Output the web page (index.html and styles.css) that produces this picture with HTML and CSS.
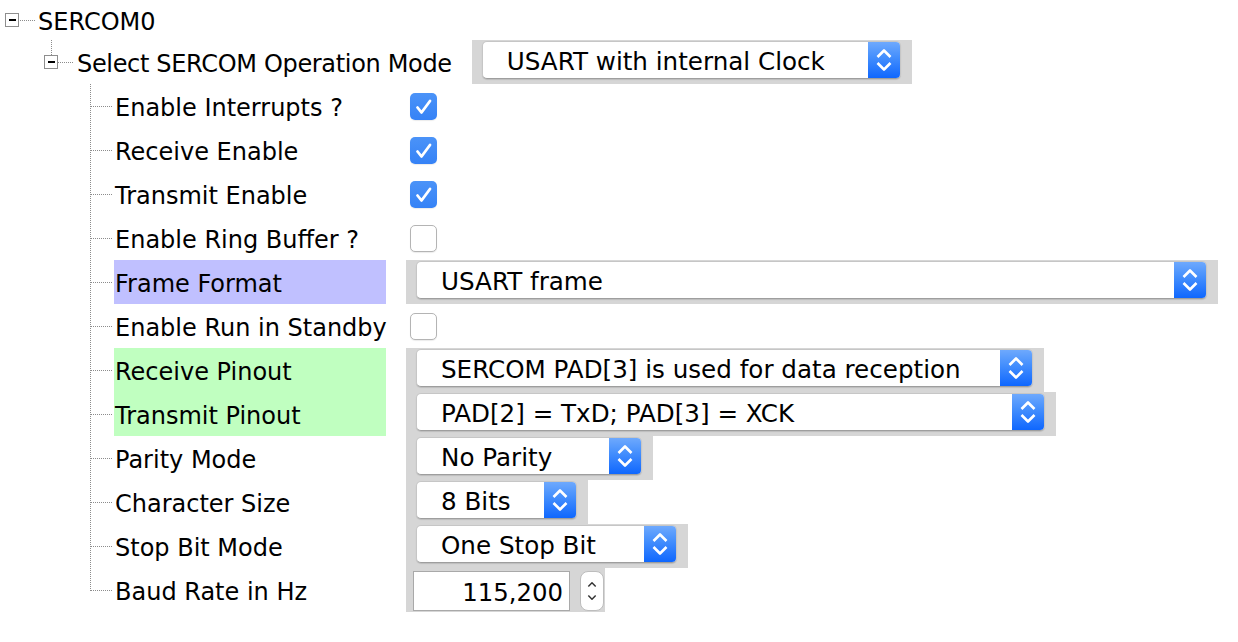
FILE: index.html
```html
<!DOCTYPE html>
<html>
<head>
<meta charset="utf-8">
<title>SERCOM0</title>
<link rel="stylesheet" href="styles.css">
</head>
<body>
<div class="tree">
  <div class="row row-root">
    <span class="handle"></span>
    <span class="hdash hdash-root"></span>
    <span class="label">SERCOM0</span>
  </div>
  <div class="row row-mode">
    <div class="handle-col"><span class="vstub"></span><span class="handle"></span></div>
    <span class="hdash hdash-mode"></span>
    <span class="label label-mode">Select SERCOM Operation Mode</span>
    <div class="panel panel-mode">
      <div class="combo w-mode"><span class="combo-text">USART with internal Clock</span><span class="stepper"><svg width="32" height="36" viewBox="0 0 32 36"><polyline points="9.5,15 16,8.5 22.5,15" fill="none" stroke="#fff" stroke-width="2.6" stroke-linejoin="round"/><polyline points="9.5,21 16,27.5 22.5,21" fill="none" stroke="#fff" stroke-width="2.6" stroke-linejoin="round"/></svg></span></div>
    </div>
  </div>
  <div class="children">
    <div class="item">
      <span class="conn"></span>
      <span class="name">Enable Interrupts ?</span>
      <div class="value value-check"><span class="check on"><svg width="27" height="27" viewBox="0 0 27 27"><polyline points="7.5,14.5 11.5,19.5 20,8" fill="none" stroke="#fff" stroke-width="2.8" stroke-linecap="round" stroke-linejoin="round"/></svg></span></div>
    </div>
    <div class="item">
      <span class="conn"></span>
      <span class="name">Receive Enable</span>
      <div class="value value-check"><span class="check on"><svg width="27" height="27" viewBox="0 0 27 27"><polyline points="7.5,14.5 11.5,19.5 20,8" fill="none" stroke="#fff" stroke-width="2.8" stroke-linecap="round" stroke-linejoin="round"/></svg></span></div>
    </div>
    <div class="item">
      <span class="conn"></span>
      <span class="name">Transmit Enable</span>
      <div class="value value-check"><span class="check on"><svg width="27" height="27" viewBox="0 0 27 27"><polyline points="7.5,14.5 11.5,19.5 20,8" fill="none" stroke="#fff" stroke-width="2.8" stroke-linecap="round" stroke-linejoin="round"/></svg></span></div>
    </div>
    <div class="item">
      <span class="conn"></span>
      <span class="name">Enable Ring Buffer ?</span>
      <div class="value value-check"><span class="check"></span></div>
    </div>
    <div class="item">
      <span class="conn"></span>
      <span class="name hl-blue">Frame Format</span>
      <div class="value"><div class="panel"><div class="combo w-frame"><span class="combo-text">USART frame</span><span class="stepper"><svg width="32" height="36" viewBox="0 0 32 36"><polyline points="9.5,15 16,8.5 22.5,15" fill="none" stroke="#fff" stroke-width="2.6" stroke-linejoin="round"/><polyline points="9.5,21 16,27.5 22.5,21" fill="none" stroke="#fff" stroke-width="2.6" stroke-linejoin="round"/></svg></span></div></div></div>
    </div>
    <div class="item">
      <span class="conn"></span>
      <span class="name">Enable Run in Standby</span>
      <div class="value value-check"><span class="check"></span></div>
    </div>
    <div class="item">
      <span class="conn"></span>
      <span class="name hl-green">Receive Pinout</span>
      <div class="value"><div class="panel"><div class="combo w-rx"><span class="combo-text">SERCOM PAD[3] is used for data reception</span><span class="stepper"><svg width="32" height="36" viewBox="0 0 32 36"><polyline points="9.5,15 16,8.5 22.5,15" fill="none" stroke="#fff" stroke-width="2.6" stroke-linejoin="round"/><polyline points="9.5,21 16,27.5 22.5,21" fill="none" stroke="#fff" stroke-width="2.6" stroke-linejoin="round"/></svg></span></div></div></div>
    </div>
    <div class="item">
      <span class="conn"></span>
      <span class="name hl-green">Transmit Pinout</span>
      <div class="value"><div class="panel"><div class="combo w-tx"><span class="combo-text">PAD[2] = TxD; PAD[3] = XCK</span><span class="stepper"><svg width="32" height="36" viewBox="0 0 32 36"><polyline points="9.5,15 16,8.5 22.5,15" fill="none" stroke="#fff" stroke-width="2.6" stroke-linejoin="round"/><polyline points="9.5,21 16,27.5 22.5,21" fill="none" stroke="#fff" stroke-width="2.6" stroke-linejoin="round"/></svg></span></div></div></div>
    </div>
    <div class="item">
      <span class="conn"></span>
      <span class="name">Parity Mode</span>
      <div class="value"><div class="panel"><div class="combo w-parity"><span class="combo-text">No Parity</span><span class="stepper"><svg width="32" height="36" viewBox="0 0 32 36"><polyline points="9.5,15 16,8.5 22.5,15" fill="none" stroke="#fff" stroke-width="2.6" stroke-linejoin="round"/><polyline points="9.5,21 16,27.5 22.5,21" fill="none" stroke="#fff" stroke-width="2.6" stroke-linejoin="round"/></svg></span></div></div></div>
    </div>
    <div class="item">
      <span class="conn"></span>
      <span class="name">Character Size</span>
      <div class="value"><div class="panel"><div class="combo w-bits"><span class="combo-text">8 Bits</span><span class="stepper"><svg width="32" height="36" viewBox="0 0 32 36"><polyline points="9.5,15 16,8.5 22.5,15" fill="none" stroke="#fff" stroke-width="2.6" stroke-linejoin="round"/><polyline points="9.5,21 16,27.5 22.5,21" fill="none" stroke="#fff" stroke-width="2.6" stroke-linejoin="round"/></svg></span></div></div></div>
    </div>
    <div class="item">
      <span class="conn"></span>
      <span class="name">Stop Bit Mode</span>
      <div class="value"><div class="panel"><div class="combo w-stop"><span class="combo-text">One Stop Bit</span><span class="stepper"><svg width="32" height="36" viewBox="0 0 32 36"><polyline points="9.5,15 16,8.5 22.5,15" fill="none" stroke="#fff" stroke-width="2.6" stroke-linejoin="round"/><polyline points="9.5,21 16,27.5 22.5,21" fill="none" stroke="#fff" stroke-width="2.6" stroke-linejoin="round"/></svg></span></div></div></div>
    </div>
    <div class="item">
      <span class="conn conn-last"></span>
      <span class="name">Baud Rate in Hz</span>
      <div class="value"><div class="panel panel-spin"><span class="field">115,200</span><span class="spin"><svg width="24" height="40" viewBox="0 0 24 40"><polyline points="8,15 12,11 16,15" fill="none" stroke="#333" stroke-width="1.6" stroke-linejoin="round"/><polyline points="8,25 12,29 16,25" fill="none" stroke="#333" stroke-width="1.6" stroke-linejoin="round"/></svg></span></div></div>
    </div>
  </div>
</div>
</body>
</html>
```

FILE: styles.css
```css
* { box-sizing: border-box; }
html, body { margin: 0; padding: 0; background: #fff; }
body {
  font-family: "DejaVu Sans", Verdana, sans-serif;
  font-size: 24px;
  color: #000;
}
.tree { display: flex; flex-direction: column; }
.row { display: flex; align-items: center; white-space: nowrap; }
.row-root { height: 40px; padding-left: 5px; }
.label { padding-top: 3px; }
.label-mode { letter-spacing: -0.33px; }
.handle {
  flex: none;
  width: 14px;
  height: 14px;
  border: 1px solid #8e8e8e;
  background: #fff;
  display: flex;
  align-items: center;
  justify-content: center;
}
.handle::before { content: ""; width: 7px; height: 2px; background: #000; }
.hdash {
  flex: none;
  height: 1px;
  background: repeating-linear-gradient(to right, #8c8c8c 0 1px, transparent 1px 2px);
}
.hdash-root { width: 15px; margin-left: 1px; margin-right: 3px; }
.row-mode { height: 44px; }
.handle-col {
  flex: none;
  align-self: flex-start;
  margin-left: 44px;
  width: 14px;
  display: flex;
  flex-direction: column;
}
.vstub {
  width: 1px;
  height: 15px;
  margin-left: 7px;
  background: repeating-linear-gradient(to bottom, #8c8c8c 0 1px, transparent 1px 2px);
}
.hdash-mode { width: 15px; margin-right: 4px; }
.panel-mode { margin-left: 20px; align-self: stretch; }

.panel {
  background: #d6d6d6;
  padding: 1px 11px 5px 10px;
  display: flex;
  align-items: flex-start;
}
.combo {
  height: 38px;
  display: flex;
  background: #fff;
  border: 1px solid #c6c6c6;
  border-bottom-color: #9e9e9e;
  border-radius: 5px;
  overflow: hidden;
  box-shadow: 0 1px 1px rgba(0, 0, 0, 0.12);
}
.combo-text {
  flex: 1;
  padding-left: 24px;
  padding-top: 3px;
  display: flex;
  align-items: center;
  font-size: 24.6px;
  white-space: nowrap;
}
.stepper {
  flex: none;
  width: 32px;
  display: flex;
  align-items: center;
  justify-content: center;
  background: linear-gradient(to bottom, #6ea9fd 0%, #4690fd 40%, #0f67fe 100%);
}
.w-mode { width: 419px; }
.w-frame { width: 791px; }
.w-rx { width: 617px; }
.w-tx { width: 629px; }
.w-parity { width: 226px; }
.w-bits { width: 161px; }
.w-stop { width: 261px; }

.children { margin-left: 90px; display: flex; flex-direction: column; }
.item { height: 44px; display: flex; }
.conn {
  flex: none;
  width: 24px;
  background:
    repeating-linear-gradient(to bottom, #8c8c8c 0 1px, transparent 1px 2px) left top / 1px 100% no-repeat,
    repeating-linear-gradient(to right, #8c8c8c 0 1px, transparent 1px 2px) 1px 22px / 21px 1px no-repeat;
}
.conn-last {
  background:
    repeating-linear-gradient(to bottom, #8c8c8c 0 1px, transparent 1px 2px) left top / 1px 23px no-repeat,
    repeating-linear-gradient(to right, #8c8c8c 0 1px, transparent 1px 2px) 1px 22px / 21px 1px no-repeat;
}
.name {
  flex: none;
  width: 272px;
  padding-left: 1px;
  padding-top: 3px;
  display: flex;
  align-items: center;
  white-space: nowrap;
}
.hl-blue { background: #c0c0ff; }
.hl-green { background: #c0ffc0; }
.value { margin-left: 20px; display: flex; }
.value-check { align-items: center; padding-left: 4px; }
.check {
  width: 27px;
  height: 27px;
  border-radius: 5px;
  border: 1px solid #b4b4b4;
  background: #fff;
  box-shadow: 0 1px 1px rgba(0, 0, 0, 0.08);
  display: block;
}
.check.on {
  border: none;
  background: linear-gradient(to bottom, #4b93f8, #3582f6);
}
.check svg { display: block; }

.panel-spin {
  padding: 3px 1px 1px 7px;
  align-items: center;
}
.field {
  width: 157px;
  height: 40px;
  background: #fff;
  border: 1px solid #a9a9a9;
  display: flex;
  align-items: center;
  justify-content: flex-end;
  padding-right: 6px;
  padding-top: 2px;
  font-size: 24.4px;
}
.spin {
  margin-left: 10px;
  width: 24px;
  height: 40px;
  border: 1px solid #bdbdbd;
  border-radius: 8px;
  background: #fff;
  display: flex;
  align-items: center;
  justify-content: center;
}
.spin svg { display: block; }
```
